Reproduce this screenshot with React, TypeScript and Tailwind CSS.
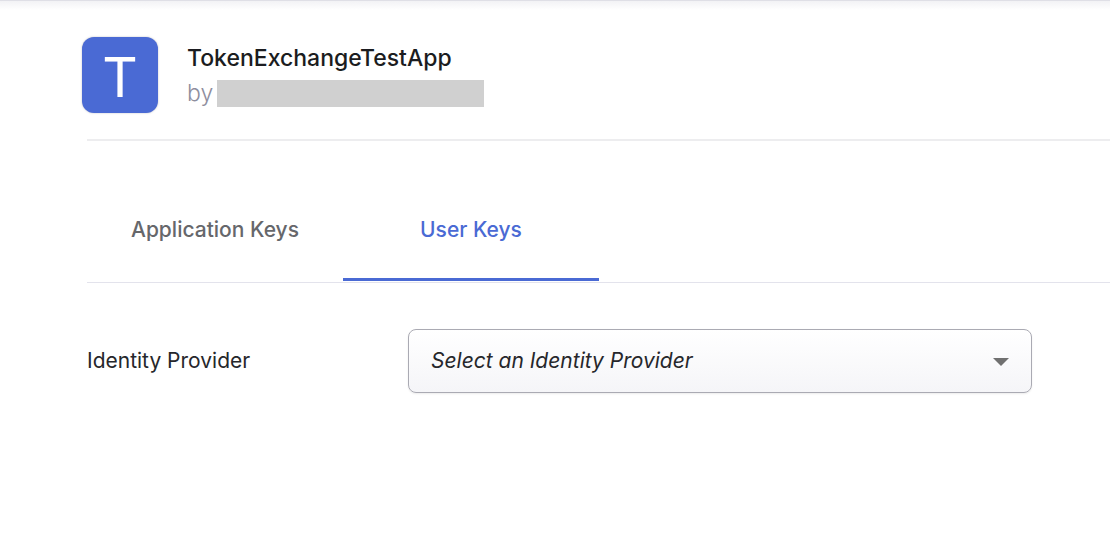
import { useState } from "react";

const tabs = ["Application Keys", "User Keys"];

function AppHeader() {
  return (
    <header className="-ml-[5px] flex items-start gap-[29px]">
      <div
        aria-hidden="true"
        className="flex size-[76px] shrink-0 items-center justify-center rounded-xl bg-[#4a6ad4] pt-1 text-[55px] leading-none text-white shadow-[0_0_2px_rgba(60,60,80,0.35)]"
      >
        T
      </div>
      <div className="min-w-0 pt-[5px]">
        <h1 className="text-[23px] leading-8 font-medium text-[#1b1c20]">TokenExchangeTestApp</h1>
        <p className="mt-1.5 flex items-center gap-1 text-[23px] leading-[27px] font-light text-[#8e8e9e]">
          by
          <span className="h-[27px] w-[267px] bg-[#d0d0d0]" />
        </p>
      </div>
    </header>
  );
}

function KeyTabs() {
  const [active, setActive] = useState("User Keys");
  return (
    <div role="tablist" className="mt-[38px] flex border-b border-[#e3e3ec] pb-px">
      {tabs.map((tab) => (
        <button
          key={tab}
          type="button"
          role="tab"
          aria-selected={active === tab}
          onClick={() => setActive(tab)}
          className={
            active === tab
              ? "h-[102px] w-64 border-b-3 border-[#4a6ad4] pt-0.5 text-[21px] font-medium text-[#4a6ad4]"
              : "h-[102px] w-64 border-b-3 border-transparent pt-0.5 text-[21px] font-medium text-[#66676b]"
          }
        >
          {tab}
        </button>
      ))}
    </div>
  );
}

function ProviderField() {
  return (
    <div className="mt-[46px] flex items-center pr-[78px]">
      <label htmlFor="provider" className="w-[321px] shrink-0 text-[21px] text-[#26272b]">
        Identity Provider
      </label>
      <div className="relative min-w-0 flex-1">
        <select
          id="provider"
          defaultValue=""
          className="h-16 w-full appearance-none rounded-lg border border-[#aaaab3] bg-linear-to-b from-white to-[#f5f5f8] pr-14 pl-[22px] text-[21px] text-[#26272b] italic shadow-[0_1px_2px_rgba(0,0,0,0.08)]"
        >
          <option value="">Select an Identity Provider</option>
        </select>
        <svg
          aria-hidden="true"
          viewBox="0 0 16 8"
          className="pointer-events-none absolute top-[29px] right-[23px] h-2 w-4 fill-[#707070]"
        >
          <path d="M0 0h16L8 8z" />
        </svg>
      </div>
    </div>
  );
}

export default function App() {
  return (
    <div className="min-h-screen bg-white font-['Inter',sans-serif]">
      <div className="h-2.5 border-t border-[#dfdfe6] bg-linear-to-b from-[#f2f2f5] to-white" />
      <main className="pt-[27px] pl-[87px]">
        <AppHeader />
        <hr className="mt-[26px] border-t-2 border-[#ededef]" />
        <KeyTabs />
        <ProviderField />
      </main>
    </div>
  );
}
